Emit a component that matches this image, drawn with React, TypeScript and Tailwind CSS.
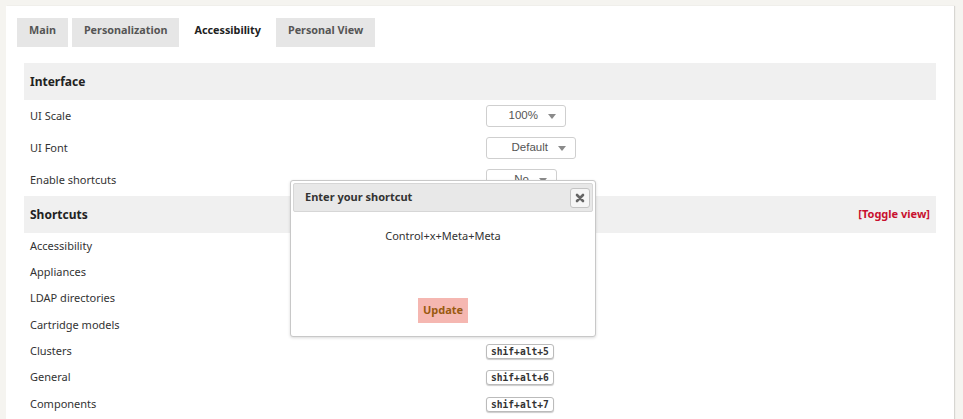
import { useState } from 'react';

const tabs = ['Main', 'Personalization', 'Accessibility', 'Personal View'];

const shortcuts: { label: string; keys?: string }[] = [
  { label: 'Accessibility' },
  { label: 'Appliances' },
  { label: 'LDAP directories' },
  { label: 'Cartridge models' },
  { label: 'Clusters', keys: 'shif+alt+5' },
  { label: 'General', keys: 'shif+alt+6' },
  { label: 'Components', keys: 'shif+alt+7' },
];

function Select({ value, width }: { value: string; width: string }) {
  return (
    <div
      className={`flex h-[22px] items-center justify-end gap-[10px] rounded-[3px] border border-[#cfcfcf] bg-white pr-[9px] text-[11.5px] text-[#555] ${width}`}
      style={{ fontFamily: '"Liberation Sans", Arial, sans-serif' }}
    >
      <span>{value}</span>
      <span className="block h-0 w-0 border-x-[4px] border-t-[5px] border-x-transparent border-t-[#8a8a8a]" />
    </div>
  );
}

function Kbd({ children }: { children: string }) {
  return (
    <span
      className="inline-block rounded-[3px] border border-[#bbb] bg-white px-[4px] text-[9.6px] font-bold leading-[13px] text-[#333] shadow-[0_1px_1px_rgba(0,0,0,0.2)]"
      style={{ fontFamily: '"DejaVu Sans Mono", monospace' }}
    >
      {children}
    </span>
  );
}

export default function App() {
  const [active, setActive] = useState('Accessibility');

  return (
    <div
      className="min-h-[419px] bg-[#f5f4f0] pl-[6px] pt-[6px] text-[#333]"
      style={{ fontFamily: '"Noto Sans", sans-serif' }}
    >
      <div className="relative h-[420px] w-[948px] bg-white px-[11px] pt-[12px] shadow-[1px_0_1px_rgba(0,0,0,0.12)]">
        {/* Tabs */}
        <div className="flex gap-[4px]">
          {tabs.map((t) => (
            <button
              key={t}
              onClick={() => setActive(t)}
              className={`h-[29px] pb-[4px] text-[10.8px] font-bold ${
                active === t ? '-mx-[4px] bg-white px-[15px] text-[#222]' : 'bg-[#e6e6e6] px-[12px] text-[#555]'
              }`}
            >
              {t}
            </button>
          ))}
        </div>

        {/* Settings table */}
        <div className="mx-[7px] mt-[16px] text-[11px]">
          <div className="flex h-[37px] items-center bg-[#f0f0f0] px-[6px] text-[12px] font-bold text-[#222]">
            Interface
          </div>
          <div className="flex h-[32px] items-center">
            <div className="w-1/2 px-[6px]">UI Scale</div>
            <div className="w-1/2 px-[6px]">
              <Select value="100%" width="w-[80px]" />
            </div>
          </div>
          <div className="flex h-[32px] items-center">
            <div className="w-1/2 px-[6px]">UI Font</div>
            <div className="w-1/2 px-[6px]">
              <Select value="Default" width="w-[90px]" />
            </div>
          </div>
          <div className="flex h-[32px] items-center">
            <div className="w-1/2 px-[6px]">Enable shortcuts</div>
            <div className="w-1/2 px-[6px]">
              <Select value="No" width="w-[71px]" />
            </div>
          </div>
          <div className="flex h-[37px] items-center justify-between bg-[#f0f0f0] px-[6px]">
            <span className="text-[12px] font-bold text-[#222]">Shortcuts</span>
            <a className="cursor-pointer text-[11px] font-bold text-[#c8102e]">[Toggle view]</a>
          </div>
          {shortcuts.map((s) => (
            <div key={s.label} className="flex h-[26.3px] items-center">
              <div className="w-1/2 px-[6px]">{s.label}</div>
              <div className="w-1/2 px-[6px]">{s.keys && <Kbd>{s.keys}</Kbd>}</div>
            </div>
          ))}
        </div>

        {/* Shortcut dialog */}
        <div className="absolute left-[284px] top-[174px] flex h-[157px] w-[306px] flex-col rounded-[3px] border border-[#c8c8c8] bg-white p-[2px] shadow-[0_1px_3px_rgba(0,0,0,0.15)]">
          <div className="flex h-[29px] items-center justify-between rounded-[2px] border border-[#d6d6d6] bg-[#e8e8e8] pl-[11px] pr-[2px]">
            <span className="text-[11px] font-bold text-[#333]">Enter your shortcut</span>
            <button className="flex h-[20px] w-[20px] items-center justify-center rounded-[3px] border border-[#c4c4c4] bg-[#f6f6f6]">
              <svg width="10" height="10" viewBox="0 0 10 10">
                <path d="M2 2 L8 8 M8 2 L2 8" stroke="#666" strokeWidth="2.6" strokeLinecap="round" />
              </svg>
            </button>
          </div>
          <div className="mt-[16px] text-center text-[11px] text-[#333]">Control+x+Meta+Meta</div>
          <div className="mt-auto mb-[11px] flex justify-center">
            <button className="h-[25px] bg-[#f5b7b1] px-[5px] text-[11px] font-bold text-[#9a5a10]">Update</button>
          </div>
        </div>
      </div>
    </div>
  );
}
